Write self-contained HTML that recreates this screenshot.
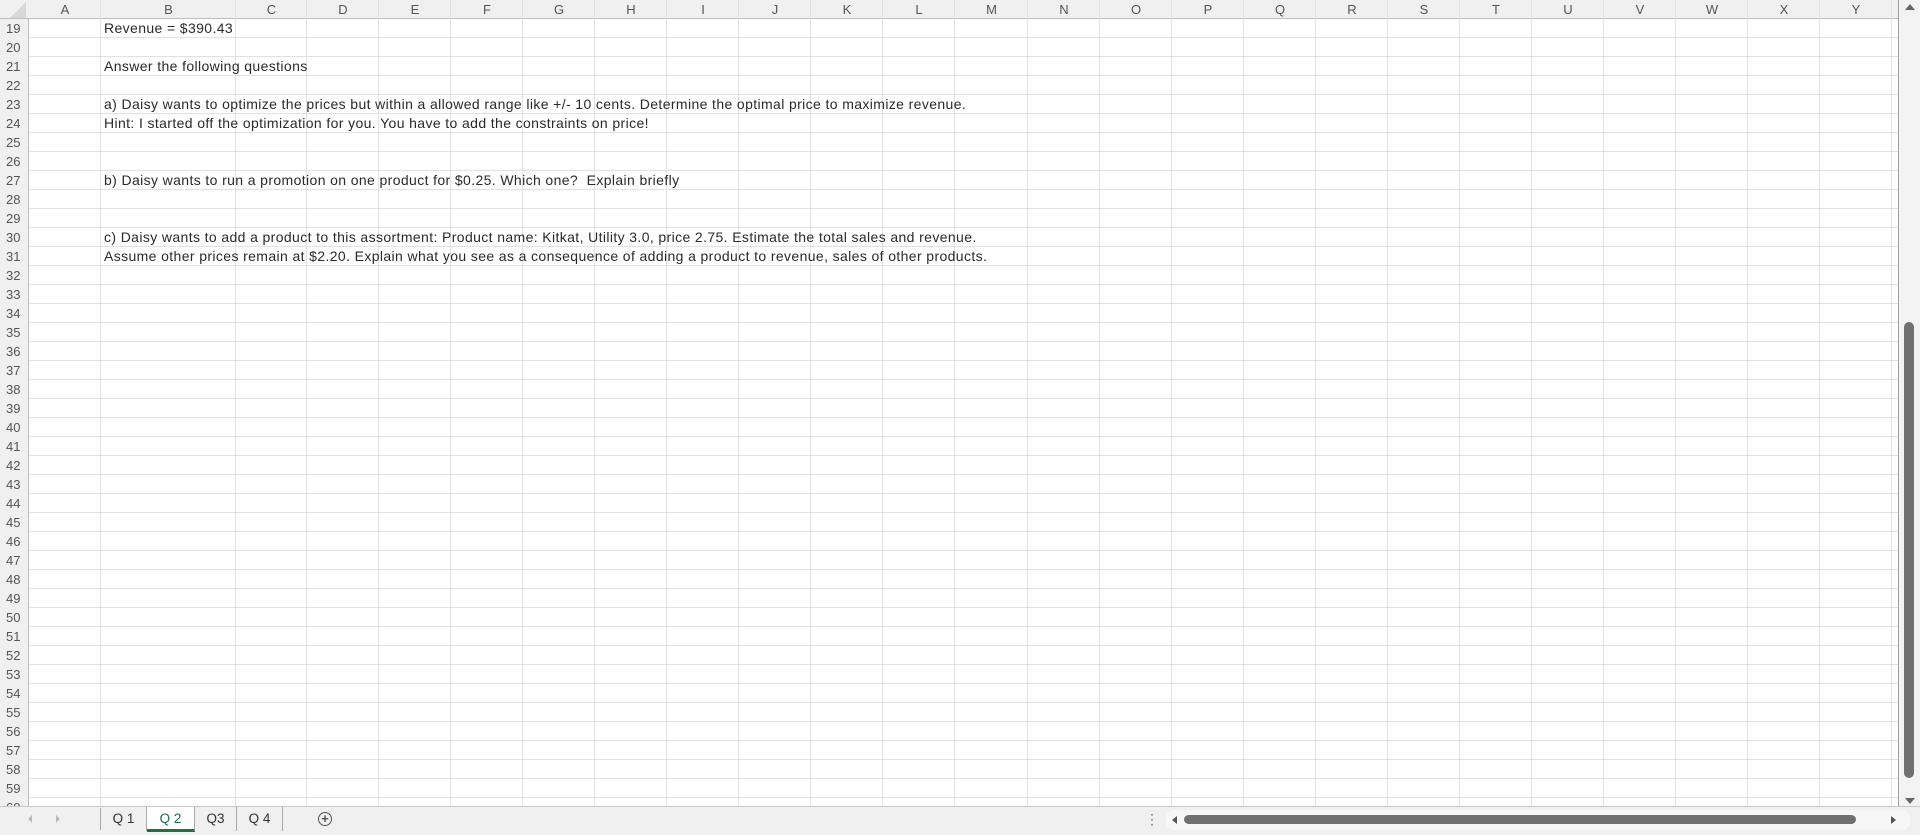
<!DOCTYPE html>
<html><head><meta charset="utf-8"><style>
body{margin:0;width:1920px;height:834px;overflow:hidden;background:#fff;font-family:"Liberation Sans",sans-serif;position:relative}
.a{position:absolute}
#hdr{left:0;top:0;width:1898px;height:18px;background:#f0f0f0;border-bottom:1px solid #bdbdbd}
#rh{left:0;top:19px;width:28px;height:787px;background:#f0f0f0;border-right:1px solid #bdbdbd}
#grid{left:29px;top:19px;width:1869px;height:787px;background:repeating-linear-gradient(to bottom,transparent 0,transparent 18px,#e1e1e1 18px,#e1e1e1 19px)}
.vl{position:absolute;top:0;width:1px;height:806px;background:#e1e1e1}
.ch{position:absolute;top:2px;font-size:13px;color:#555;text-align:center;width:72px}
.rn{position:absolute;left:6px;font-size:13px;color:#555;line-height:19px}
.t{position:absolute;left:104px;font-size:14px;letter-spacing:0.38px;color:#2a2a2a;line-height:19px;white-space:nowrap}
#tabs{left:0;top:806px;width:1920px;height:28px;background:#f0f0f0;border-top:1px solid #c8c8c8}
.tab{position:absolute;top:807px;height:24px;font-size:13.5px;color:#333;line-height:24px;text-align:center;border-right:1px solid #aaa}
</style></head><body>
<div class="a" id="grid"></div>
<div class="a" id="hdr"></div>
<div class="a" id="rh"></div>
<div id="cols"></div>
<div class="a" style="left:1898px;top:0;width:1px;height:806px;background:#a0a0a0"></div>
<div class="a" style="left:1899px;top:0;width:21px;height:806px;background:#f3f3f3"></div>
<div class="a" style="left:1905px;top:4px;width:0;height:0;border-left:5px solid transparent;border-right:5px solid transparent;border-bottom:6px solid #666"></div>
<div class="a" style="left:1905px;top:798px;width:0;height:0;border-left:5px solid transparent;border-right:5px solid transparent;border-top:6px solid #666"></div>
<div class="a" style="left:1904px;top:322px;width:10px;height:456px;background:#707070;border-radius:5px"></div>
<div class="a" style="left:0;top:0;width:0;height:0;border-left:16px solid transparent;border-bottom:16px solid #d8d8d8;margin:2px 0 0 10px"></div>

<div class="t" style="top:19px">Revenue = $390.43</div>
<div class="t" style="top:57px">Answer the following questions</div>
<div class="t" style="top:95px">a) Daisy wants to optimize the prices but within a allowed range like +/- 10 cents. Determine the optimal price to maximize revenue.</div>
<div class="t" style="top:114px">Hint: I started off the optimization for you. You have to add the constraints on price!</div>
<div class="t" style="top:171px">b) Daisy wants to run a promotion on one product for $0.25. Which one?&nbsp; Explain briefly</div>
<div class="t" style="top:228px">c) Daisy wants to add a product to this assortment: Product name: Kitkat, Utility 3.0, price 2.75. Estimate the total sales and revenue.</div>
<div class="t" style="top:247px">Assume other prices remain at $2.20. Explain what you see as a consequence of adding a product to revenue, sales of other products.</div>

<div class="a" id="tabs"></div>
<div class="a" style="left:28px;top:815px;width:0;height:0;border-top:4px solid transparent;border-bottom:4px solid transparent;border-right:4px solid #bbb"></div>
<div class="a" style="left:56px;top:815px;width:0;height:0;border-top:4px solid transparent;border-bottom:4px solid transparent;border-left:4px solid #bbb"></div>
<div class="a" style="left:100px;top:808px;width:1px;height:22px;background:#aaa"></div>
<div class="tab" style="left:101px;width:45px;background:#f0f0f0">Q 1</div>
<div class="tab" style="left:147px;width:47px;background:#fff;color:#1e7145;border-bottom:3px solid #1e7145;height:22px">Q 2</div>
<div class="tab" style="left:195px;width:41px">Q3</div>
<div class="tab" style="left:237px;width:45px">Q 4</div>
<div class="a" style="left:318px;top:812px;width:12px;height:12px;border:1.5px solid #555;border-radius:50%;font-size:13px;line-height:12px;text-align:center;color:#555;font-weight:bold">+</div>
<div class="a" style="left:1150px;top:812px;font-size:12px;color:#333;line-height:5px">·<br>·<br>·</div>
<div class="a" style="left:1166px;top:810px;width:744px;height:20px;background:#f7f7f7;border-radius:8px"></div>
<div class="a" style="left:1172px;top:816px;width:0;height:0;border-top:4px solid transparent;border-bottom:4px solid transparent;border-right:5px solid #555"></div>
<div class="a" style="left:1184px;top:815px;width:672px;height:9px;background:#707070;border-radius:5px"></div>
<div class="a" style="left:1891px;top:816px;width:0;height:0;border-top:4px solid transparent;border-bottom:4px solid transparent;border-left:5px solid #555"></div>

<script>
var c=document.getElementById('cols'),h='';
var L='ABCDEFGHIJKLMNOPQRSTUVWXY'.split(''),x=[29,101,236];
for(var i=3;i<=25;i++)x.push(Math.round(307+(i-3)*72.05));
for(var i=0;i<25;i++){var w=x[i+1]-x[i];h+='<div class="ch" style="left:'+x[i]+'px;width:'+w+'px">'+L[i]+'</div><div class="vl" style="left:'+(x[i+1]-1)+'px"></div>';}
for(var r=19;r<=60;r++){h+='<div class="rn" style="top:'+(19+(r-19)*19)+'px">'+r+'</div>';}
c.innerHTML=h;
</script>
</body></html>
